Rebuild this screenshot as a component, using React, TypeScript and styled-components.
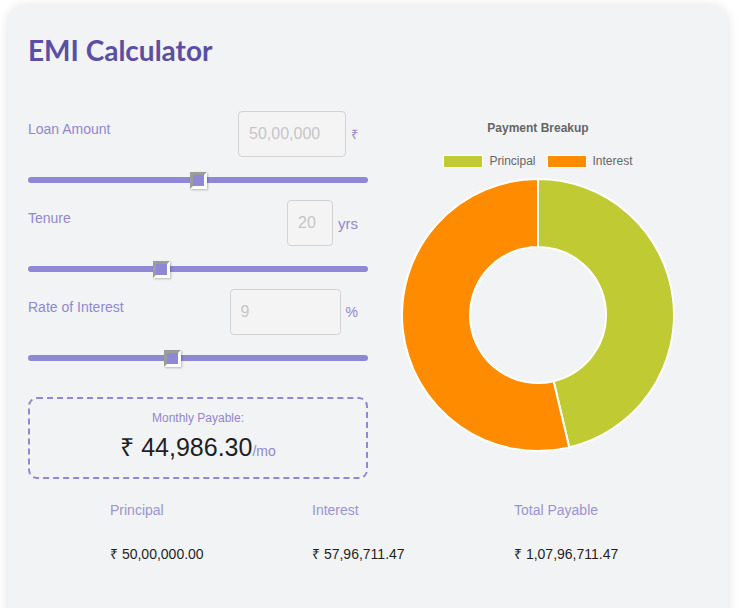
import React from "react";
import styled, { createGlobalStyle } from "styled-components";

const GlobalStyle = createGlobalStyle`
  html, body {
    margin: 0;
    padding: 0;
    background: #ffffff;
  }
  body {
    padding: 6px 8px;
    font-family: "Liberation Sans", Arial, sans-serif;
  }
`;

const Card = styled.div`
  width: 680px;
  min-height: 640px;
  padding: 20px;
  background: #f2f3f5;
  border-radius: 18px;
  box-shadow: 0 0 12px rgba(0, 0, 0, 0.12);
`;

const Title = styled.h1`
  margin: 6px 0 0;
  font-family: "Lato", "Open Sans", sans-serif;
  font-weight: 700;
  font-size: 28px;
  line-height: 36px;
  color: #5a4fa3;
`;

const Body = styled.div`
  display: grid;
  grid-template-columns: 340px 300px;
  column-gap: 20px;
  margin-top: 43px;
`;

const Controls = styled.div`
  display: flex;
  flex-direction: column;
`;

const SliderRow = styled.div`
  display: flex;
  flex-direction: column;
  padding-bottom: 12px;
`;

const RowHeader = styled.div`
  display: flex;
  align-items: flex-start;
  justify-content: space-between;
  padding-right: 10px;
`;

const Label = styled.span`
  margin-top: 10px;
  font-size: 14px;
  color: #8f88cf;
`;

const InputGroup = styled.div`
  display: flex;
  align-items: center;
  gap: 5px;
`;

const ValueInput = styled.input<{ $width: number }>`
  box-sizing: border-box;
  width: ${(p) => p.$width}px;
  height: 46px;
  padding: 0 10px;
  border: 1px solid #d3d3d6;
  border-radius: 4px;
  background: #f4f4f5;
  font-family: "Liberation Sans", Arial, sans-serif;
  font-size: 16px;
  color: #c6c6c8;
  outline: none;
`;

const Unit = styled.span<{ $size?: number }>`
  font-size: ${(p) => p.$size ?? 14}px;
  color: #8f88cf;
`;

const Range = styled.input`
  -webkit-appearance: none;
  appearance: none;
  width: 340px;
  height: 16px;
  margin: 15px 0 0;
  background: transparent;

  &::-webkit-slider-runnable-track {
    height: 6px;
    border-radius: 3px;
    background: #8f88d6;
  }

  &::-webkit-slider-thumb {
    -webkit-appearance: none;
    appearance: none;
    box-sizing: border-box;
    width: 17px;
    height: 17px;
    margin-top: -5.5px;
    background: #8f88d6;
    border: 3px solid;
    border-color: #9c9c9c #ffffff #ffffff #9c9c9c;
    box-shadow: 1px 1px 2px rgba(0, 0, 0, 0.25);
  }
`;

const MonthlyBox = styled.div`
  box-sizing: border-box;
  height: 82px;
  margin-top: 19px;
  border: 2px dashed #8f88d6;
  border-radius: 9px;
  display: flex;
  flex-direction: column;
  align-items: center;
  padding-top: 12px;
`;

const MonthlyLabel = styled.span`
  font-size: 12px;
  color: #8f88cf;
`;

const MonthlyValue = styled.div`
  margin-top: 4px;
  font-size: 25px;
  color: #1f1f24;
`;

const PerMonth = styled.span`
  font-size: 14px;
  color: #8f88cf;
`;

const ChartPanel = styled.div`
  display: flex;
  flex-direction: column;
  align-items: center;
  padding-top: 10px;
`;

const ChartTitle = styled.div`
  font-size: 12px;
  font-weight: 700;
  color: #666666;
`;

const Legend = styled.div`
  display: flex;
  gap: 11px;
  margin-top: 19px;
`;

const LegendItem = styled.div`
  display: flex;
  align-items: center;
  gap: 6px;
  font-size: 12px;
  color: #666666;
`;

const Swatch = styled.span<{ $color: string }>`
  box-sizing: border-box;
  width: 40px;
  height: 13px;
  background: ${(p) => p.$color};
  border: 1px solid #ffffff;
`;

const Donut = styled.svg`
  display: block;
  margin-top: 10px;
`;

const Stats = styled.div`
  display: grid;
  grid-template-columns: repeat(3, 202px);
  padding-left: 82px;
  margin-top: 23px;
`;

const Stat = styled.div`
  display: flex;
  flex-direction: column;
  gap: 26px;
`;

const StatLabel = styled.span`
  font-size: 14px;
  color: #9a94d2;
`;

const StatValue = styled.span`
  font-size: 14px;
  color: #1f1f24;
`;

const principal = 5000000;
const interest = 5796711.47;
const total = principal + interest;

const fmt = (n: number) =>
  "₹ " +
  n.toLocaleString("en-IN", { minimumFractionDigits: 2, maximumFractionDigits: 2 });

const arcPath = (
  cx: number,
  cy: number,
  r1: number,
  r2: number,
  a0: number,
  a1: number
) => {
  const pt = (r: number, a: number) => [cx + r * Math.cos(a), cy + r * Math.sin(a)];
  const large = a1 - a0 > Math.PI ? 1 : 0;
  const [x0, y0] = pt(r1, a0);
  const [x1, y1] = pt(r1, a1);
  const [x2, y2] = pt(r2, a1);
  const [x3, y3] = pt(r2, a0);
  return `M${x0} ${y0} A${r1} ${r1} 0 ${large} 1 ${x1} ${y1} L${x2} ${y2} A${r2} ${r2} 0 ${large} 0 ${x3} ${y3} Z`;
};

const rows = [
  { label: "Loan Amount", value: "50,00,000", width: 108, unit: "₹", unitSize: 13, min: 0, max: 10000000, cur: 5000000 },
  { label: "Tenure", value: "20", width: 46, unit: "yrs", unitSize: 15, min: 1, max: 50, cur: 20 },
  { label: "Rate of Interest", value: "9", width: 111, unit: "%", unitSize: 14, min: 1, max: 20, cur: 9 },
];

export default function App() {
  const start = -Math.PI / 2;
  const split = start + (principal / total) * Math.PI * 2;
  const end = start + Math.PI * 2;
  const cx = 150;
  const cy = 137;

  return (
    <>
      <GlobalStyle />
      <Card>
        <Title>EMI Calculator</Title>
        <Body>
          <Controls>
            {rows.map((r) => (
              <SliderRow key={r.label}>
                <RowHeader>
                  <Label>{r.label}</Label>
                  <InputGroup>
                    <ValueInput $width={r.width} defaultValue={r.value} />
                    <Unit $size={r.unitSize}>{r.unit}</Unit>
                  </InputGroup>
                </RowHeader>
                <Range type="range" min={r.min} max={r.max} defaultValue={r.cur} />
              </SliderRow>
            ))}
            <MonthlyBox>
              <MonthlyLabel>Monthly Payable:</MonthlyLabel>
              <MonthlyValue>
                ₹ 44,986.30<PerMonth>/mo</PerMonth>
              </MonthlyValue>
            </MonthlyBox>
          </Controls>
          <ChartPanel>
            <ChartTitle>Payment Breakup</ChartTitle>
            <Legend>
              <LegendItem>
                <Swatch $color="#c0ca33" />
                Principal
              </LegendItem>
              <LegendItem>
                <Swatch $color="#ff8c00" />
                Interest
              </LegendItem>
            </Legend>
            <Donut width="300" height="276" viewBox="0 0 300 276">
              <path
                d={arcPath(cx, cy, 136, 68, start, split)}
                fill="#c0ca33"
                stroke="#ffffff"
                strokeWidth="2"
              />
              <path
                d={arcPath(cx, cy, 136, 68, split, end)}
                fill="#ff8c00"
                stroke="#ffffff"
                strokeWidth="2"
              />
            </Donut>
          </ChartPanel>
        </Body>
        <Stats>
          <Stat>
            <StatLabel>Principal</StatLabel>
            <StatValue>{fmt(principal)}</StatValue>
          </Stat>
          <Stat>
            <StatLabel>Interest</StatLabel>
            <StatValue>{fmt(interest)}</StatValue>
          </Stat>
          <Stat>
            <StatLabel>Total Payable</StatLabel>
            <StatValue>{fmt(total)}</StatValue>
          </Stat>
        </Stats>
      </Card>
    </>
  );
}
